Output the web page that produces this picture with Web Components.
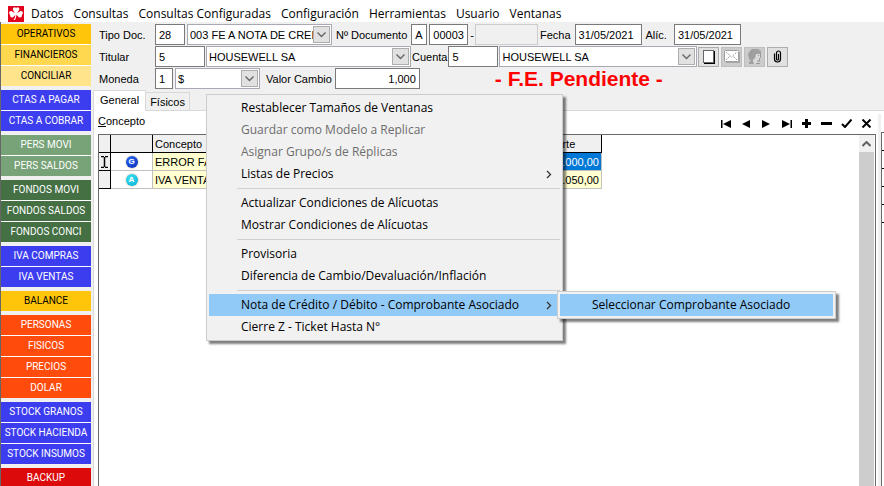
<!DOCTYPE html>
<html lang="es">
<head>
<meta charset="utf-8">
<title>Comprobantes</title>
<style>
  html, body { margin: 0; height: 100%; }
  body { overflow: hidden; background: #f0f0f0; font: 11px/14px "Liberation Sans", Arial, sans-serif; color: #000; }
</style>
</head>
<body>
<office-app></office-app>

<script>
// ── Iconos ──────────────────────────────────────────────────────────────────
const svg = (w, h, body) =>
  `<svg width="${w}" height="${h}" viewBox="0 0 ${w} ${h}" aria-hidden="true" style="display:block">${body}</svg>`;

const ICONS = {
  logo: svg(16, 16, `<rect width="16" height="16" fill="#e3001f"/>
    <g fill="#fff"><circle cx="6.600" cy="3" r="1.800"/><circle cx="9.600" cy="3" r="1.800"/><path d="M5 4h6L8.500 8h-1z"/>
    <circle cx="3" cy="7" r="1.900"/><circle cx="4" cy="9.500" r="1.900"/><path d="M3 5.200l5 2v1.300l-3.500 3z"/>
    <circle cx="13" cy="7" r="1.900"/><circle cx="12" cy="9.500" r="1.900"/><path d="M13 5.200l-5 2v1.300l3.500 3z"/>
    <path d="M7.400 8h1.200l-.6 3.500L7 14H5.500l1.500-2.500z"/></g>`),
  down: svg(9, 6, '<path d="M0.5 0.5L4.5 4.5L8.5 0.5" fill="none" stroke="#666" stroke-width="1.4"/>'),
  up: svg(9, 6, '<path d="M0.5 5L4.5 1L8.5 5" fill="none" stroke="#606060" stroke-width="2"/>'),
  right: svg(6, 9, '<path d="M1 1L4.5 4.5L1 8" fill="none" stroke="#333" stroke-width="1.3"/>'),
  page: svg(12, 14, '<path d="M1 13.500h10.500V1" fill="none" stroke="#000" stroke-width="1.500"/><rect x=".5" y=".5" width="10" height="12" fill="#fff" stroke="#666"/>'),
  mail: svg(16, 13, `<path d="M2 12.500h13.500V2" fill="none" stroke="#a6a6a6" stroke-width="2"/>
    <rect x=".5" y=".5" width="14" height="11" rx="1" fill="#fff" stroke="#a0a0a0"/>
    <path d="M2 2l5.500 5L13 2M2 10l4-4M13 10L9 6" fill="none" stroke="#a0a0a0" stroke-dasharray="2 1"/>`),
  face: svg(14, 15, `<path d="M4 0h6l3 2v3h-3L8 7v3L6 9 5 12l2 3H1v-2l2-1-2-2-1-5 2-3z" fill="#a0a0a0"/>
    <path d="M8 5h4l1 3.500-1 .5v2l-3 1v3H6l-1-4 2-1z" fill="#dadada"/>
    <path d="M10 6.500h1M12.500 5v3.500l-1 1V12H9M8 14.500h4M3 3h2M2 6h2M4 9h1" stroke="#999" fill="none"/>`),
  clip: svg(9, 13, '<path d="M1.500 3.500v5.500a3 3 0 0 0 6 0V3a2 2 0 0 0-4 0v6a1 1 0 0 0 2 0V4" fill="none" stroke="#000" stroke-width="1.200"/>'),
  first: svg(11, 8, '<path d="M0 0h1.500v8H0zM10 0v8L2 4z"/>'),
  prev: svg(11, 8, '<path d="M9 0v8L1 4z"/>'),
  next: svg(11, 8, '<path d="M1 0v8l8-4z"/>'),
  last: svg(11, 8, '<path d="M9.500 0H11v8H9.500zM1 0v8l8-4z"/>'),
  plus: svg(11, 9, '<path d="M4 0h3v3h3v3H7v3H4V6H1V3h3z"/>'),
  minus: svg(11, 9, '<path d="M0 3h11v3H0z"/>'),
  check: svg(11, 9, '<path d="M1 5l3 3L10.500 .5" fill="none" stroke="#000" stroke-width="2"/>'),
  cross: svg(11, 9, '<path d="M1.500 .5l8 8M9.500 .5l-8 8" fill="none" stroke="#000" stroke-width="2"/>'),
  cursor: svg(7, 12, '<path d="M0 .5h3M4 .5h3M0 11.500h3M4 11.500h3M3.500 1v10" fill="none" stroke="#000" stroke-width="1.500"/>')
};

class BaseElement extends HTMLElement {
  connectedCallback() {
    if (this.shadowRoot) return;
    this.attachShadow({ mode: 'open' });
    this.shadowRoot.innerHTML = this.render();
  }
}

// ── <menu-bar> ──────────────────────────────────────────────────────────────
const MENU = ['Datos', 'Consultas', 'Consultas Configuradas', 'Configuración', 'Herramientas', 'Usuario', 'Ventanas'];

class MenuBar extends BaseElement {
  render() {
    return `
      <style>
        :host { display: block; background: #fff; }
        nav { display: flex; align-items: center; height: 22px; padding: 5px 0 0 8px; box-sizing: border-box; }
        svg { margin-right: 2px; }
        button { border: 0; background: none; margin: 0; padding: 0 5px; font: 12px/16px "Open Sans", sans-serif; color: #000; white-space: nowrap; }
      </style>
      <nav>${ICONS.logo}${MENU.map(m => `<button type="button">${m}</button>`).join('')}</nav>`;
  }
}
customElements.define('menu-bar', MenuBar);

// ── <side-nav> ──────────────────────────────────────────────────────────────
const SIDE_GROUPS = [
  [['OPERATIVOS', '#ffc50a', '#000'], ['FINANCIEROS', '#ffd850', '#000'], ['CONCILIAR', '#ffe48c', '#000']],
  [['CTAS A PAGAR', '#3d3df0'], ['CTAS A COBRAR', '#3d3df0']],
  [['PERS MOVI', '#78a278'], ['PERS SALDOS', '#78a278']],
  [['FONDOS MOVI', '#447044'], ['FONDOS SALDOS', '#447044'], ['FONDOS CONCI', '#447044']],
  [['IVA COMPRAS', '#3d3df0'], ['IVA VENTAS', '#3d3df0']],
  [['BALANCE', '#ffc50a', '#000']],
  [['PERSONAS', '#ff4c0d'], ['FISICOS', '#ff4c0d'], ['PRECIOS', '#ff4c0d'], ['DOLAR', '#ff4c0d']],
  [['STOCK GRANOS', '#3d3df0'], ['STOCK HACIENDA', '#3d3df0'], ['STOCK INSUMOS', '#3d3df0']],
  [['BACKUP', '#dc0a0a']]
];

class SideNav extends BaseElement {
  render() {
    return `
      <style>
        :host { display: block; width: 90px; flex: none; border-left: 1px solid #666; overflow: hidden; }
        nav { display: flex; flex-direction: column; gap: 4px; padding-top: 2px; }
        div { display: flex; flex-direction: column; gap: 1px; background: #fff; }
        button { border: 0; margin: 0; padding: 0; height: 20px; font: 10px/20px Roboto, sans-serif; white-space: nowrap; }
      </style>
      <nav>${SIDE_GROUPS.map(g => `<div>${g.map(([t, bg, fg = '#fff']) =>
        `<button type="button" style="background:${bg};color:${fg}">${t}</button>`).join('')}</div>`).join('')}</nav>`;
  }
}
customElements.define('side-nav', SideNav);

// ── <text-field label value width> ──────────────────────────────────────────
class TextField extends BaseElement {
  render() {
    const a = n => this.getAttribute(n) || '';
    return `
      <style>
        :host { display: flex; align-items: center; flex: none; }
        label { white-space: nowrap; min-width: var(--label, 0); padding-right: var(--gap, 0); }
        input { width: ${a('width')}px; height: 21px; box-sizing: border-box; margin: 0; padding: 0 3px; border: 1px solid #7a7a7a;
          border-radius: 0; background: #fff; font: inherit; color: #000; text-align: ${a('align') || 'left'}; }
        input:disabled { background: #f0f0f0; border-color: #ccc; }
      </style>
      ${a('label') ? `<label for="f">${a('label')}</label>` : ''}
      <input id="f" type="text" value="${a('value')}" aria-label="${a('label') || a('name')}" ${this.hasAttribute('disabled') ? 'disabled' : ''}>`;
  }
}
customElements.define('text-field', TextField);

// ── <combo-box value width> ─────────────────────────────────────────────────
class ComboBox extends BaseElement {
  render() {
    return `
      <style>
        :host { display: grid; flex: none; width: ${this.getAttribute('width')}px; }
        select { grid-area: 1 / 1; width: 100%; height: 21px; box-sizing: border-box; margin: 0; padding: 0 17px 0 2px; appearance: none;
          border: 1px solid #a9a9b3; border-radius: 0; background: #fff; font: inherit; color: #000; }
        span { grid-area: 1 / 1; justify-self: end; align-self: center; display: grid; place-items: center; width: 17px; height: 17px;
          box-sizing: border-box; margin-right: 2px; border: 1px solid #adadad; background: #e1e1e1; pointer-events: none; }
      </style>
      <select aria-label="${this.getAttribute('name')}"><option>${this.getAttribute('value')}</option></select>
      <span>${ICONS.down}</span>`;
  }
}
customElements.define('combo-box', ComboBox);

// ── <voucher-form> ──────────────────────────────────────────────────────────
class VoucherForm extends BaseElement {
  render() {
    return `
      <style>
        :host { display: flex; flex-direction: column; gap: 1px; padding: 2px 0 0 6px; white-space: nowrap; }
        .row { display: flex; align-items: center; height: 21px; gap: 2px; }
        .row.tight { gap: 1px; }
        .lead { --label: 56px; }
        .doc { --gap: 4px; margin-left: 2px; }
        .dash { --gap: 1px; }
        .fecha { --gap: 4px; }
        .alic { --gap: 7px; margin-left: 2px; }
        .cuenta { --gap: 1px; }
        .wide { --gap: 3px; margin-left: 4px; }
        .tools { display: flex; gap: 2px; }
        button { display: grid; place-items: center; width: 21px; height: 20px; box-sizing: border-box; margin: 0; padding: 0; border: 1px solid #adadad; background: #e1e1e1; }
        button:disabled { background: #ccc; border-color: #bfbfbf; }
        strong { margin-left: 73px; font: bold 21px/21px "Liberation Sans", Arial, sans-serif; color: #f00; }
      </style>
      <div class="row">
        <text-field class="lead" label="Tipo Doc." value="28" width="30"></text-field>
        <combo-box name="Tipo" value="003 FE A NOTA DE CREDITO" width="145"></combo-box>
        <text-field class="doc" label="Nº Documento" value="A" width="16"></text-field>
        <text-field name="Punto de venta" value="00003" width="39"></text-field>
        <text-field class="dash" label="-" width="63" disabled></text-field>
        <text-field class="fecha" label="Fecha" value="31/05/2021" width="67"></text-field>
        <text-field class="alic" label="Alíc." value="31/05/2021" width="67"></text-field>
      </div>
      <div class="row tight">
        <text-field class="lead" label="Titular" value="5" width="50"></text-field>
        <combo-box name="Titular" value="HOUSEWELL SA" width="205"></combo-box>
        <text-field class="cuenta" label="Cuenta" value="5" width="50"></text-field>
        <combo-box name="Cuenta" value="HOUSEWELL SA" width="198"></combo-box>
        <div class="tools">
          <button type="button" aria-label="Nuevo">${ICONS.page}</button>
          <button type="button" aria-label="Enviar" disabled>${ICONS.mail}</button>
          <button type="button" aria-label="Persona" disabled>${ICONS.face}</button>
          <button type="button" aria-label="Adjuntar">${ICONS.clip}</button>
        </div>
      </div>
      <div class="row">
        <text-field class="lead" label="Moneda" value="1" width="18"></text-field>
        <combo-box name="Moneda" value="$" width="85"></combo-box>
        <text-field class="wide" label="Valor Cambio" value="1,000" width="85" align="right"></text-field>
        <strong>- F.E. Pendiente -</strong>
      </div>`;
  }
}
customElements.define('voucher-form', VoucherForm);

// ── <tab-panel> ─────────────────────────────────────────────────────────────
class TabPanel extends BaseElement {
  render() {
    return `
      <style>
        :host { display: flex; flex-direction: column; flex: 1; min-height: 0; }
        .tabs { display: flex; align-items: flex-end; height: 21px; }
        button { height: 18px; margin: 0; padding: 0 4px; border: 1px solid #d9d9d9; border-width: 1px 1px 0 0; background: #f0f0f0; font: inherit; color: #000; }
        button.on { height: 21px; padding: 0 6px 2px; border-left-width: 1px; background: #fff; margin-bottom: -1px; z-index: 1; }
        .body { display: flex; flex: 1; min-height: 0; border: 1px solid #d9d9d9; border-width: 1px 0 0 1px; background: #fff; }
        ::slotted(*) { flex: 1; min-width: 0; }
      </style>
      <div class="tabs" role="tablist">
        <button type="button" role="tab" aria-selected="true" class="on">General</button>
        <button type="button" role="tab" aria-selected="false">Físicos</button>
      </div>
      <div class="body"><slot></slot></div>`;
  }
}
customElements.define('tab-panel', TabPanel);

// ── <record-toolbar> ────────────────────────────────────────────────────────
const ACTIONS = [['first', 'Primero'], ['prev', 'Anterior'], ['next', 'Siguiente'], ['last', 'Último'],
  ['plus', 'Agregar'], ['minus', 'Quitar'], ['check', 'Confirmar'], ['cross', 'Cancelar']];

class RecordToolbar extends BaseElement {
  render() {
    return `
      <style>
        :host { display: flex; justify-content: space-between; height: 23px; }
        span { line-height: 21px; }
        div { display: flex; padding-top: 2px; }
        button { display: grid; place-items: center; width: 20px; height: 21px; margin: 0; padding: 0; border: 0; background: none; }
      </style>
      <span><u>C</u>oncepto</span>
      <div>${ACTIONS.map(([i, t]) => `<button type="button" aria-label="${t}">${ICONS[i]}</button>`).join('')}</div>`;
  }
}
customElements.define('record-toolbar', RecordToolbar);

// ── <concept-grid> ──────────────────────────────────────────────────────────
const ball = (letter, light, dark) => `<i style="background:radial-gradient(circle at 40% 35%, ${light}, ${dark})">${letter}</i>`;
const ROWS = [
  { mark: ICONS.cursor, icon: ball('G', '#2f6df5', '#0022b0'), text: 'ERROR FA', amount: '5.000,00', on: true },
  { mark: '', icon: ball('A', '#3fe4f5', '#00a8d0'), text: 'IVA VENTA', amount: '1.050,00' }
];

class ConceptGrid extends BaseElement {
  render() {
    return `
      <style>
        :host { display: flex; justify-content: space-between; flex: 1; min-height: 0; border: 1px solid #696969; border-bottom: 0; }
        table { border-collapse: separate; border-spacing: 0; table-layout: fixed; width: 503px; align-self: flex-start; }
        th, td { height: 18px; box-sizing: border-box; padding: 0 2px; font-weight: normal; text-align: left; white-space: nowrap; overflow: hidden;
          line-height: 14px; border: 1px solid #c0c0c0; border-width: 0 1px 1px 0; background: #ffffcf; }
        thead th, th[scope=row] { background: #f0f0f0; border-color: #000; }
        th[scope=row] { padding: 0 1px; }
        td.ic { background: #fff; text-align: center; }
        td.num { text-align: right; }
        td.on { background: #0078d7; color: #fff; }
        th svg { margin: auto; }
        i { display: block; width: 12px; height: 12px; margin: auto; border-radius: 50%; color: #fff; font: bold 8px/12px "Liberation Sans", sans-serif; text-align: center; box-shadow: 0 0 1px 1px #e8e4d4; }
        .bar { width: 15px; display: flex; flex-direction: column; background: #cdcdcd; margin-right: 1px; }
        .bar button { display: grid; place-items: center; height: 17px; margin: 0; padding: 0; border: 0; background: #f0f0f0; }
      </style>
      <table>
        <colgroup><col style="width:12px"><col style="width:42px"><col><col style="width:66px"></colgroup>
        <thead><tr><th></th><th></th><th>Concepto</th><th>Importe</th></tr></thead>
        <tbody>${ROWS.map(r => `<tr><th scope="row">${r.mark}</th><td class="ic">${r.icon}</td><td>${r.text}</td>
          <td class="num ${r.on ? 'on' : ''}">${r.amount}</td></tr>`).join('')}</tbody>
      </table>
      <div class="bar"><button type="button" aria-label="Subir">${ICONS.up}</button></div>`;
  }
}
customElements.define('concept-grid', ConceptGrid);

// ── <side-grid> borde de la grilla vecina ───────────────────────────────────
class SideGrid extends BaseElement {
  render() {
    return `
      <style>
        :host { display: flex; flex: none; width: 6px; padding-top: 3px; }
        .split { width: 3px; background: #f0f0f0; }
        .edge { flex: 1; margin-top: 18px; border: 1px solid #696969; border-width: 1px 0 0 1px; }
        .edge div { height: 17px; border-bottom: 1px solid #000; }
      </style>
      <div class="split"></div>
      <div class="edge">${'<div></div>'.repeat(5)}</div>`;
  }
}
customElements.define('side-grid', SideGrid);

// ── <popup-menu> / <menu-entry> ─────────────────────────────────────────────
class PopupMenu extends BaseElement {
  render() {
    return `
      <style>
        :host { display: block; box-sizing: border-box; padding: 2px; border: 1px solid #ccc; background: #f1f1f1;
          box-shadow: 3px 3px 2px rgba(0, 0, 0, .5); font: 12px/22px "Open Sans", sans-serif; }
      </style>
      <div role="menu"><slot></slot></div>`;
  }
}
customElements.define('popup-menu', PopupMenu);

class MenuEntry extends BaseElement {
  render() {
    return `
      <style>
        :host { display: block; position: relative; }
        button { display: flex; align-items: center; justify-content: space-between; width: 100%; height: 22px; margin: 0; padding: 0 8px 0 32px;
          border: 0; background: none; font: inherit; color: #000; text-align: left; white-space: nowrap; }
        button:disabled { color: #6d6d6d; }
        :host([active]) > button { background: #91c9f7; }
        ::slotted(popup-menu) { position: absolute; left: calc(100% - 3px); top: -3px; width: 279px; }
      </style>
      <button type="button" role="menuitem" ${this.hasAttribute('disabled') ? 'disabled' : ''}>
        <span>${this.getAttribute('label')}</span>${this.hasAttribute('more') ? ICONS.right : ''}
      </button>
      <slot></slot>`;
  }
}
customElements.define('menu-entry', MenuEntry);

class MenuLine extends BaseElement {
  render() {
    return `
      <style>:host { display: block; height: 1px; margin: 3px 0 3px 28px; background: #d0d0d0; }</style>`;
  }
}
customElements.define('menu-line', MenuLine);

// ── <office-app> ────────────────────────────────────────────────────────────
class OfficeApp extends BaseElement {
  render() {
    return `
      <style>
        :host { display: flex; flex-direction: column; height: 100vh; overflow: hidden; position: relative; }
        .work { display: flex; flex: 1; min-height: 0; }
        main { display: flex; flex-direction: column; flex: 1; min-width: 0; margin-left: 2px; }
        .page { display: flex; }
        .list { display: flex; flex-direction: column; flex: 1; min-width: 0; padding: 0 2px 0 4px; }
        .ctx { position: absolute; left: 206px; top: 94px; width: 357px; }
      </style>
      <menu-bar></menu-bar>
      <div class="work">
        <side-nav></side-nav>
        <main>
          <voucher-form></voucher-form>
          <tab-panel>
            <div class="page">
              <div class="list">
                <record-toolbar></record-toolbar>
                <concept-grid></concept-grid>
              </div>
              <side-grid></side-grid>
            </div>
          </tab-panel>
        </main>
      </div>
      <popup-menu class="ctx">
        <menu-entry label="Restablecer Tamaños de Ventanas"></menu-entry>
        <menu-entry label="Guardar como Modelo a Replicar" disabled></menu-entry>
        <menu-entry label="Asignar Grupo/s de Réplicas" disabled></menu-entry>
        <menu-entry label="Listas de Precios" more></menu-entry>
        <menu-line></menu-line>
        <menu-entry label="Actualizar Condiciones de Alícuotas"></menu-entry>
        <menu-entry label="Mostrar Condiciones de Alícuotas"></menu-entry>
        <menu-line></menu-line>
        <menu-entry label="Provisoria"></menu-entry>
        <menu-entry label="Diferencia de Cambio/Devaluación/Inflación"></menu-entry>
        <menu-line></menu-line>
        <menu-entry label="Nota de Crédito / Débito - Comprobante Asociado" more active>
          <popup-menu><menu-entry label="Seleccionar Comprobante Asociado" active></menu-entry></popup-menu>
        </menu-entry>
        <menu-entry label="Cierre Z - Ticket Hasta N°"></menu-entry>
      </popup-menu>`;
  }
}
customElements.define('office-app', OfficeApp);
</script>
</body>
</html>
